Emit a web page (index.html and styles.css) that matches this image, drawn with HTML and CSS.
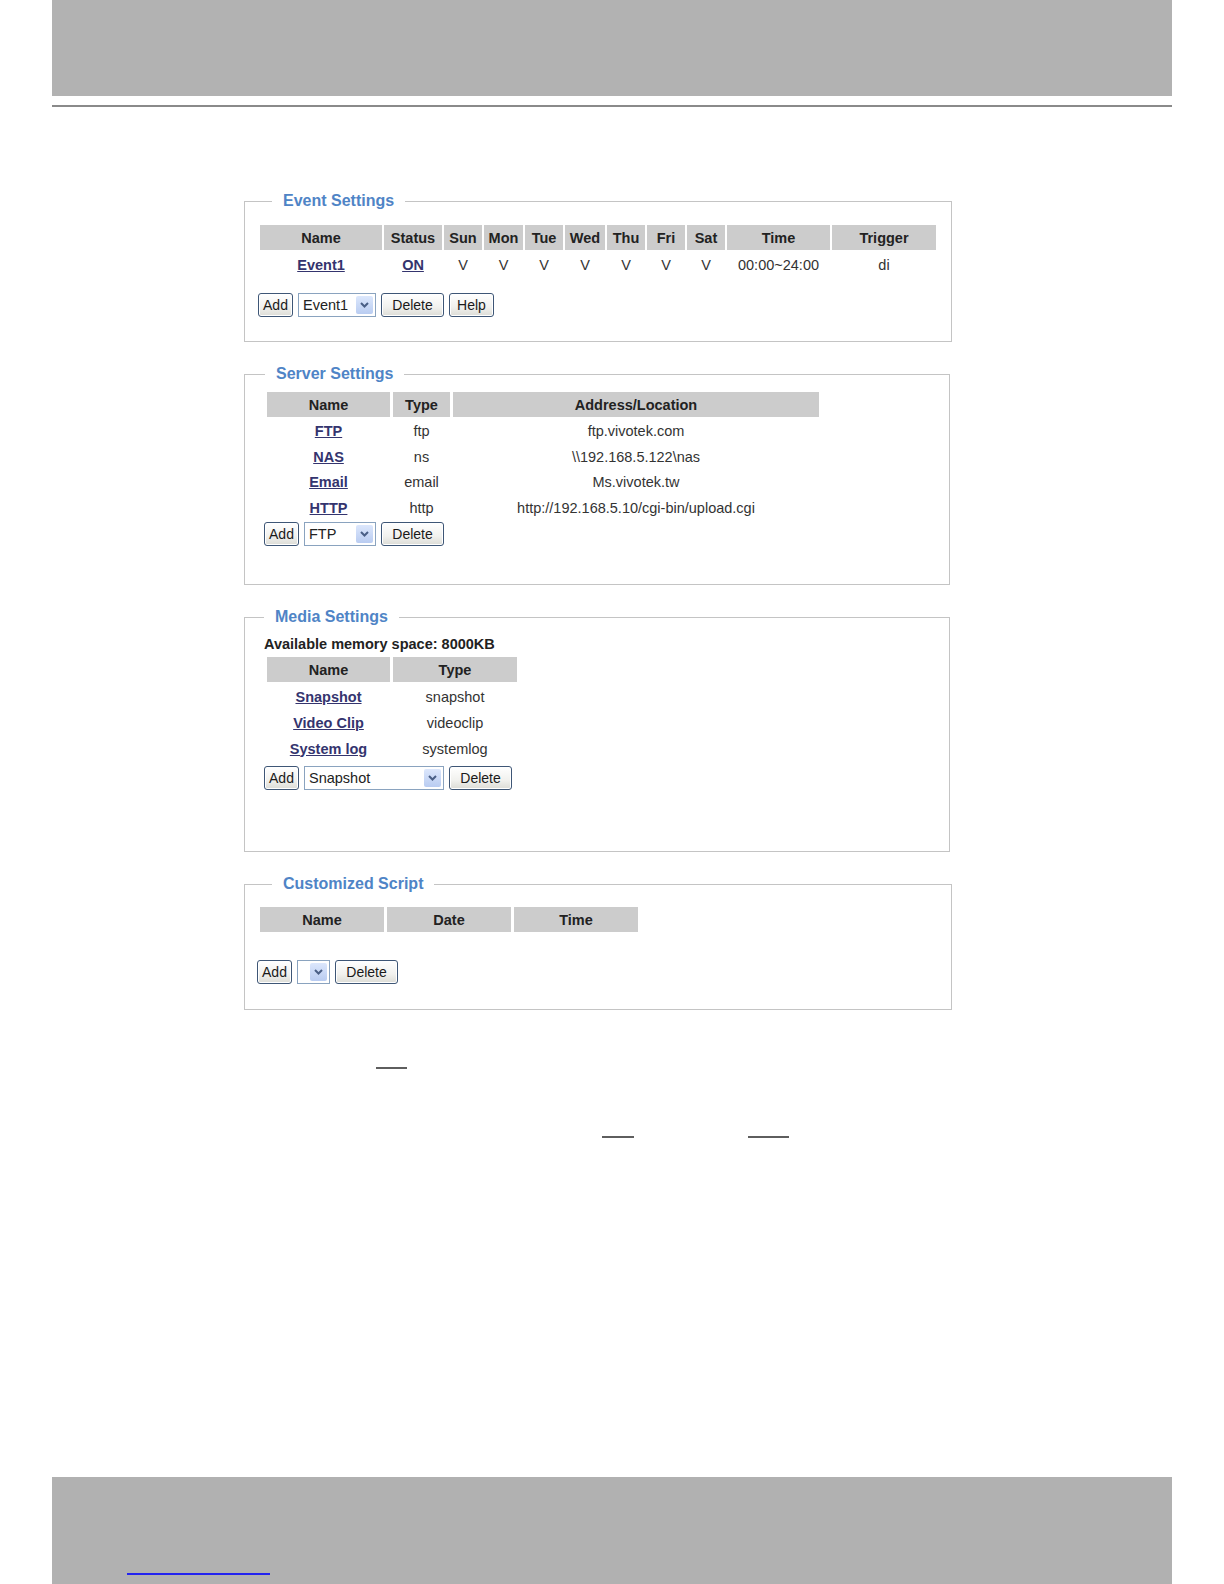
FILE: index.html
```html
<!DOCTYPE html>
<html lang="en">

<head>
  <meta charset="UTF-8">
  <meta name="viewport" content="width=device-width, initial-scale=1.0">
  <title>Application Setting</title>
  <link rel="stylesheet" href="styles.css">
</head>

<body>
  <div class="top-bar"></div>
  <div class="top-rule"></div>

  <div class="content">

    <!-- Event Settings -->
    <fieldset class="box box-event">
      <legend>Event Settings</legend>
      <table class="grid grid-event">
        <tr>
          <th>Name</th><th>Status</th><th>Sun</th><th>Mon</th><th>Tue</th><th>Wed</th>
          <th>Thu</th><th>Fri</th><th>Sat</th><th>Time</th><th>Trigger</th>
        </tr>
        <tr class="row-event">
          <td><a href="#">Event1</a></td><td><a href="#">ON</a></td>
          <td>V</td><td>V</td><td>V</td><td>V</td><td>V</td><td>V</td><td>V</td>
          <td>00:00~24:00</td><td>di</td>
        </tr>
      </table>
      <div class="actions actions-event">
        <button class="btn btn-add">Add</button>
        <span class="combo combo-event">
          <select><option>Event1</option></select>
          <span class="combo-arrow"><svg width="9" height="6" viewBox="0 0 9 6"><path d="M1 1l3.5 3.5L8 1" fill="none" stroke="#4a5f86" stroke-width="2"/></svg></span>
        </span>
        <button class="btn btn-delete">Delete</button>
        <button class="btn btn-help">Help</button>
      </div>
    </fieldset>

    <!-- Server Settings -->
    <fieldset class="box box-server">
      <legend>Server Settings</legend>
      <table class="grid grid-server">
        <tr><th>Name</th><th>Type</th><th>Address/Location</th></tr>
        <tr><td><a href="#">FTP</a></td><td>ftp</td><td>ftp.vivotek.com</td></tr>
        <tr><td><a href="#">NAS</a></td><td>ns</td><td>\\192.168.5.122\nas</td></tr>
        <tr><td><a href="#">Email</a></td><td>email</td><td>Ms.vivotek.tw</td></tr>
        <tr><td><a href="#">HTTP</a></td><td>http</td><td>http://192.168.5.10/cgi-bin/upload.cgi</td></tr>
      </table>
      <div class="actions">
        <button class="btn btn-add">Add</button>
        <span class="combo combo-server">
          <select><option>FTP</option></select>
          <span class="combo-arrow"><svg width="9" height="6" viewBox="0 0 9 6"><path d="M1 1l3.5 3.5L8 1" fill="none" stroke="#4a5f86" stroke-width="2"/></svg></span>
        </span>
        <button class="btn btn-delete">Delete</button>
      </div>
    </fieldset>

    <!-- Media Settings -->
    <fieldset class="box box-media">
      <legend>Media Settings</legend>
      <p class="memory">Available memory space: 8000KB</p>
      <table class="grid grid-media">
        <tr><th>Name</th><th>Type</th></tr>
        <tr><td><a href="#">Snapshot</a></td><td>snapshot</td></tr>
        <tr><td><a href="#">Video Clip</a></td><td>videoclip</td></tr>
        <tr><td><a href="#">System log</a></td><td>systemlog</td></tr>
      </table>
      <div class="actions actions-media">
        <button class="btn btn-add">Add</button>
        <span class="combo combo-media">
          <select><option>Snapshot</option></select>
          <span class="combo-arrow"><svg width="9" height="6" viewBox="0 0 9 6"><path d="M1 1l3.5 3.5L8 1" fill="none" stroke="#4a5f86" stroke-width="2"/></svg></span>
        </span>
        <button class="btn btn-delete">Delete</button>
      </div>
    </fieldset>

    <!-- Customized Script -->
    <fieldset class="box box-script">
      <legend>Customized Script</legend>
      <table class="grid grid-script">
        <tr><th>Name</th><th>Date</th><th>Time</th></tr>
      </table>
      <div class="actions actions-script">
        <button class="btn btn-add">Add</button>
        <span class="combo combo-script">
          <select></select>
          <span class="combo-arrow"><svg width="9" height="6" viewBox="0 0 9 6"><path d="M1 1l3.5 3.5L8 1" fill="none" stroke="#4a5f86" stroke-width="2"/></svg></span>
        </span>
        <button class="btn btn-delete">Delete</button>
      </div>
    </fieldset>
  </div>

  <div class="notes">
    <p class="note note-first"><span class="mark mark-a"></span></p>
    <p class="note note-second"><span class="mark mark-b"></span><span class="mark mark-c"></span></p>
  </div>

  <div class="footer">
    <a class="footer-link" href="#"></a>
  </div>
</body>

</html>
```

FILE: styles.css
```css
body {
  margin: 0;
  font-family: "Liberation Sans", Arial, sans-serif;
  font-size: 14px;
  color: #333;
  background-color: #fff;
  display: flex;
  flex-direction: column;
  min-height: 1584px;
}

.top-bar {
  margin: 0 52px;
  height: 96px;
  background-color: #b2b2b2;
}

.top-rule {
  margin: 9px 52px 0;
  height: 2px;
  background-color: #8a8a8a;
}

.content {
  margin-top: 84px;
  padding-left: 244px;
}

/* fieldset boxes */
.box {
  box-sizing: border-box;
  margin: 0 0 22px 0;
  border: 1px solid #c4c4c4;
  padding: 0;
}

.box legend {
  font-size: 16px;
  font-weight: bold;
  line-height: 20px;
  color: #4f84c6;
  padding: 0 11px;
}

.box-event {
  width: 708px;
  padding: 12px 0 24px 13px;
}

.box-event legend {
  margin-left: 14px;
}

.box-server {
  width: 706px;
  padding: 5px 0 38px 19px;
}

.box-server legend {
  margin-left: 1px;
}

.box-media {
  width: 706px;
  padding: 8px 0 61px 19px;
}

.box-script {
  width: 708px;
  padding: 10px 0 25px 12px;
}

.box-script legend {
  margin-left: 15px;
}

.memory {
  margin: 0;
  line-height: 19px;
  font-size: 14.5px;
  font-weight: bold;
  color: #222;
}

/* tables */
.grid {
  table-layout: fixed;
  border-spacing: 3px;
  font-size: 14.5px;
}

.grid th {
  height: 25px;
  padding: 0;
  background-color: #cccccc;
  color: #222;
  font-weight: bold;
  text-align: center;
}

.grid td {
  height: 23px;
  padding: 0;
  text-align: center;
  color: #333;
}

.grid a {
  color: #34346e;
  font-weight: bold;
}

.grid-event {
  width: 680px;
  border-spacing: 2px;
}

.grid-event .row-event td {
  height: 26px;
}

.grid-event th:nth-child(1) { width: 122px; }
.grid-event th:nth-child(2) { width: 58px; }
.grid-event th:nth-child(3) { width: 38px; }
.grid-event th:nth-child(4) { width: 39px; }
.grid-event th:nth-child(5) { width: 38px; }
.grid-event th:nth-child(6) { width: 40px; }
.grid-event th:nth-child(7) { width: 38px; }
.grid-event th:nth-child(8) { width: 38px; }
.grid-event th:nth-child(9) { width: 38px; }
.grid-event th:nth-child(10) { width: 103px; }
.grid-event th:nth-child(11) { width: 104px; }

.grid-server {
  width: 558px;
}

.grid-server td {
  height: 22.5px;
}

.grid-server th:nth-child(1) { width: 123px; }
.grid-server th:nth-child(2) { width: 57px; }
.grid-server th:nth-child(3) { width: 366px; }

.grid-media {
  width: 256px;
}

.grid-media th:nth-child(1) { width: 123px; }
.grid-media th:nth-child(2) { width: 124px; }

.grid-script {
  width: 383px;
}

.grid-script th { width: 124px; }

/* button rows */
.actions {
  display: flex;
  align-items: center;
  gap: 5px;
  height: 24px;
}

.actions-event {
  margin-top: 13px;
}

.actions-media {
  margin-top: 3px;
}

.actions-script {
  margin-top: 25px;
}

.btn {
  box-sizing: border-box;
  height: 24px;
  padding: 0;
  font-family: "Liberation Sans", Arial, sans-serif;
  font-size: 14px;
  color: #1a1a1a;
  border: 1px solid #3e5676;
  border-radius: 3px;
  background: linear-gradient(#ffffff, #f1f1ee 60%, #dcdcd6);
  box-shadow: inset 0 0 0 1px #fff;
  cursor: pointer;
}

.btn-add { width: 35px; }
.btn-delete { width: 63px; }
.btn-help { width: 45px; }

.combo {
  position: relative;
  display: inline-block;
  height: 24px;
}

.combo select {
  box-sizing: border-box;
  width: 100%;
  height: 24px;
  margin: 0;
  padding: 0 4px;
  font-family: "Liberation Sans", Arial, sans-serif;
  font-size: 14.5px;
  color: #222;
  background-color: #fff;
  border: 1px solid #8aa3bf;
  border-radius: 0;
  appearance: none;
  -webkit-appearance: none;
}

.combo-arrow {
  position: absolute;
  top: 3px;
  right: 3px;
  width: 17px;
  height: 18px;
  display: flex;
  align-items: center;
  justify-content: center;
  background: linear-gradient(#dce7fc, #b9ccf1);
  border-radius: 2px;
}

.combo-event { width: 78px; }
.combo-server { width: 72px; }
.combo-media { width: 140px; }
.combo-script { width: 33px; }

/* underline marks below the boxes */
.notes {
  margin-top: 35px;
}

.note {
  margin: 0;
  height: 2px;
}

.note-second {
  margin-top: 67px;
  display: flex;
}

.mark {
  display: block;
  height: 2px;
  background-color: #5e5e5e;
}

.mark-a {
  margin-left: 376px;
  width: 31px;
}

.mark-b {
  margin-left: 602px;
  width: 32px;
}

.mark-c {
  margin-left: 114px;
  width: 41px;
}

.footer {
  margin: auto 52px 0;
  height: 107px;
  background-color: #b1b1b1;
  box-sizing: border-box;
  padding: 96px 0 0 75px;
}

.footer-link {
  display: block;
  width: 143px;
  height: 0;
  border-bottom: 2px solid #2323f0;
}
```
